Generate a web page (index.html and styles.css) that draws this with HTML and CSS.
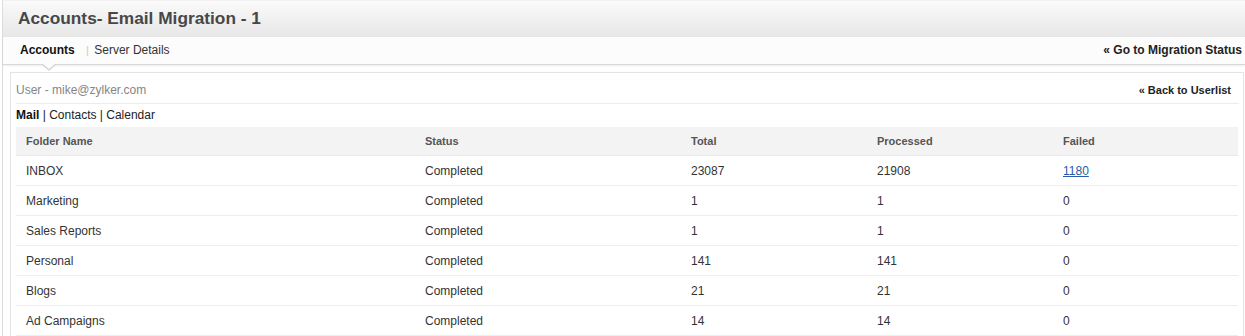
FILE: index.html
```html
<!DOCTYPE html>
<html lang="en">
    <head>
        <title>Accounts- Email Migration</title>
        <meta charset="UTF-8">
        <link rel="stylesheet" href="styles.css">
    </head>

    <body>
        <div id="page">
            <div class="titlebar">Accounts- Email Migration - 1</div>

            <div class="tabs">
                <div class="tab-list">
                    <span class="tab active">Accounts</span>
                    <span class="tab-sep">|</span>
                    <span class="tab">Server Details</span>
                </div>
                <a class="nav-link" href="#">&laquo; Go to Migration Status</a>
                <span class="pointer"></span>
            </div>

            <div class="panel">
                <div class="userbar">
                    <span class="user">User - mike@zylker.com</span>
                    <a class="back-link" href="#">&laquo; Back to Userlist</a>
                </div>

                <div class="subtabs">
                    <b>Mail</b> | Contacts | Calendar
                </div>

                <table class="folders">
                    <colgroup>
                        <col style="width:399px">
                        <col style="width:266px">
                        <col style="width:186px">
                        <col style="width:186px">
                        <col>
                    </colgroup>
                    <tr>
                        <th>Folder Name</th>
                        <th>Status</th>
                        <th>Total</th>
                        <th>Processed</th>
                        <th>Failed</th>
                    </tr>
                    <tr>
                        <td>INBOX</td>
                        <td>Completed</td>
                        <td>23087</td>
                        <td>21908</td>
                        <td><a href="#">1180</a></td>
                    </tr>
                    <tr>
                        <td>Marketing</td>
                        <td>Completed</td>
                        <td>1</td>
                        <td>1</td>
                        <td>0</td>
                    </tr>
                    <tr>
                        <td>Sales Reports</td>
                        <td>Completed</td>
                        <td>1</td>
                        <td>1</td>
                        <td>0</td>
                    </tr>
                    <tr>
                        <td>Personal</td>
                        <td>Completed</td>
                        <td>141</td>
                        <td>141</td>
                        <td>0</td>
                    </tr>
                    <tr>
                        <td>Blogs</td>
                        <td>Completed</td>
                        <td>21</td>
                        <td>21</td>
                        <td>0</td>
                    </tr>
                    <tr>
                        <td>Ad Campaigns</td>
                        <td>Completed</td>
                        <td>14</td>
                        <td>14</td>
                        <td>0</td>
                    </tr>
                </table>
            </div>
        </div>
    </body>
</html>
```

FILE: styles.css
```css
body{
    margin: 0;
    font-family: 'Liberation Sans', Arial, sans-serif;
    font-size: 12px;
    color: #333;
    background-color: white;
}

#page{
    margin-left: 2px;
    border-left: 1px solid #dcdcdc;
    min-height: 336px;
}

.titlebar{
    height: 37px;
    line-height: 35px;
    padding-left: 15px;
    font-size: 17.3px;
    font-weight: bold;
    color: #474747;
    background: linear-gradient(#fafafa, #e7e7e7);
    border-top: 1px solid #f2f2f2;
    box-sizing: border-box;
}

.tabs{
    position: relative;
    display: flex;
    justify-content: space-between;
    align-items: center;
    height: 25px;
    padding: 0 3px 2px 17px;
    background-color: #fcfcfc;
    border-bottom: 1px solid #d9d9d9;
    box-shadow: 0 1px 2px rgba(0, 0, 0, 0.08);
}

.tab{
    color: #333;
}

.tab.active{
    font-weight: bold;
    color: #111;
}

.tab-sep{
    color: #ccc;
    margin: 0 2px 0 8px;
    font-size: 11px;
}

.nav-link{
    font-weight: bold;
    color: #222;
    text-decoration: none;
}

.pointer{
    position: absolute;
    left: 38px;
    bottom: -7px;
    width: 0;
    height: 0;
    border-left: 8px solid transparent;
    border-right: 8px solid transparent;
    border-top: 7px solid #d6d6d6;
}

.pointer::after{
    content: "";
    position: absolute;
    left: -7px;
    top: -8px;
    border-left: 7px solid transparent;
    border-right: 7px solid transparent;
    border-top: 6px solid #fcfcfc;
}

.panel{
    margin: 7px 1px 0 7px;
    border: 1px solid #e3e3e3;
    border-bottom: none;
    padding: 0 4px 0 5px;
}

.userbar{
    display: flex;
    justify-content: space-between;
    align-items: center;
    height: 27px;
    padding: 3px 8px 0 0;
    border-bottom: 1px solid #ececec;
}

.user{
    color: #858585;
}

.back-link{
    font-size: 11px;
    font-weight: bold;
    color: #222;
    text-decoration: none;
}

.subtabs{
    height: 23px;
    line-height: 23px;
    color: #222;
}

.subtabs b{
    color: #111;
}

.folders{
    width: 1222px;
    border-collapse: collapse;
    table-layout: fixed;
}

.folders th{
    height: 28px;
    padding: 0 10px;
    text-align: left;
    font-size: 11px;
    font-weight: bold;
    color: #555;
    background-color: #f3f3f3;
    border-bottom: 1px solid #e9e9e9;
}

.folders td{
    height: 29px;
    padding: 0 10px;
    color: #333;
    border-bottom: 1px solid #eeeeee;
}

.folders a{
    color: #2b5aa8;
}
```
